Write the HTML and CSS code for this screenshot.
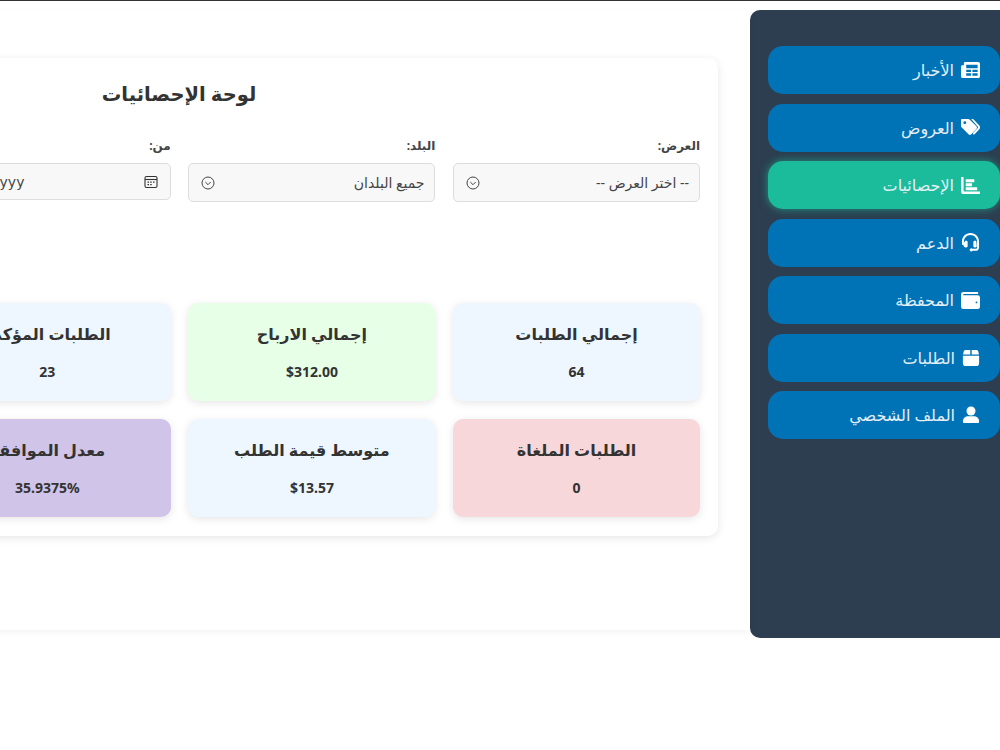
FILE: index.html
```html
<!DOCTYPE html>
<html lang="ar" dir="rtl">
<head>
<meta charset="utf-8">
<title>لوحة الإحصائيات</title>
<link rel="stylesheet" href="styles.css">
</head>
<body>
<div class="layout">
  <aside class="sidebar">
    <nav class="nav">
      <a class="nav-item"><svg class="nav-icon" viewBox="0 0 20 20"><path fill-rule="evenodd" d="M3 2.500A1.500 1.500 0 0 1 4.500 1H18a2 2 0 0 1 2 2v13a2 2 0 0 1-2 2H2a2 2 0 0 1-2-2V6a1.500 1.500 0 0 1 1.500-1.500H3zM5.500 4v3.500h12V4zM5.500 9.200v2.300h5V9.200zm6.500 0v2.300h5.500V9.200zM5.500 13v2.500h5V13zm6.500 0v2.500h5.500V13z"/></svg><span>الأخبار</span></a>
      <a class="nav-item"><svg class="nav-icon" viewBox="0 0 20 20"><path fill-rule="evenodd" d="M0 2.200C0 1.500.6 1 1.300 1h6.200c.6 0 1.100.2 1.500.6l7.200 7.200c.8.800.8 2.100 0 2.900l-5.400 5.500c-.8.800-2.100.8-2.900 0L.6 9.800C.2 9.400 0 8.900 0 8.300zM4 3.400a1.500 1.500 0 1 0 0 3 1.500 1.500 0 0 0 0-3z"/><path d="M10.700 1h1.400c.5 0 .9.200 1.200.5l6 6.300c1 1.100 1 2.900 0 4l-5 5.200c-.4.400-1.100.4-1.500 0-.4-.4-.4-1 0-1.400l4.900-5.100c.4-.4.400-1 0-1.400z"/></svg><span>العروض</span></a>
      <a class="nav-item active"><svg class="nav-icon" viewBox="0 0 20 20"><path d="M2.700 1v14.300c0 .6.500 1 1 1H20V19H3a3 3 0 0 1-3-3V1z"/><path d="M5 3.500h9v3H5zM5 7.700h6.500v3H5zM5 11.900h12v3H5z"/></svg><span>الإحصائيات</span></a>
      <a class="nav-item"><svg class="nav-icon" viewBox="0 0 20 20"><path d="M10 0C4.800 0 1 4 1 9v2.500c0 .6.500 1.100 1.100 1.100s1-.5 1-1.100V9c0-3.800 3.100-6.900 6.900-6.900s6.900 3.100 6.900 6.900v6.200c0 .8-.6 1.500-1.400 1.500h-3.300a1.700 1.700 0 1 0 0 2.100h3.300c2 0 3.500-1.600 3.500-3.600V9c0-5-3.800-9-9-9z"/><path d="M3.800 9.300c0-.6.500-1.100 1.100-1.100h.7c.8 0 1.400.6 1.400 1.400v4.200c0 .8-.6 1.400-1.400 1.400h-.4c-1.500 0-2.700-1.300-2.700-2.900 0-1.100.3-2 .8-2.100zM16.200 9.300c0-.6-.5-1.100-1.100-1.100h-.7c-.8 0-1.400.6-1.400 1.400v4.200c0 .8.600 1.400 1.400 1.400h.4c.8 0 1.400-.3 1.800-.8z"/></svg><span>الدعم</span></a>
      <a class="nav-item"><svg class="nav-icon" viewBox="0 0 20 20"><path fill-rule="evenodd" d="M2.500 1H17c.8 0 1.200.5 1.200 1.100 0 .6-.4 1.100-1.200 1.100H3c-.4 0-.7.300-.7.700s.3.700.7.700h14.500A2.500 2.500 0 0 1 20 7v9.500a2.500 2.500 0 0 1-2.500 2.500h-15A2.500 2.500 0 0 1 0 16.500v-13A2.500 2.500 0 0 1 2.500 1zM16.300 11a1 1 0 1 0 0 2 1 1 0 0 0 0-2z"/></svg><span>المحفظة</span></a>
      <a class="nav-item"><svg class="nav-icon narrow" viewBox="0 0 20 20"><path d="M3.800 1h5.400v5H1.200l.7-3.200C2.100 1.800 2.900 1 3.800 1zM10.800 1h5.400c.9 0 1.700.8 1.900 1.800l.7 3.200h-8zM1 7.500h18v8.500c0 1.700-1.300 3-3 3H4c-1.700 0-3-1.300-3-3z"/></svg><span>الطلبات</span></a>
      <a class="nav-item"><svg class="nav-icon narrow" viewBox="0 0 20 20"><circle cx="10" cy="5.500" r="5"/><path d="M6.500 11.500h7c3 0 5.500 2.500 5.500 5.500v.5c0 .8-.7 1.500-1.500 1.500h-15C1.700 19 1 18.300 1 17.500V17c0-3 2.500-5.500 5.500-5.500z"/></svg><span>الملف الشخصي</span></a>
    </nav>
  </aside>
  <main class="main">
    <section class="panel">
      <h1 class="title">لوحة الإحصائيات</h1>
      <div class="filters">
        <div class="field">
          <label class="label">العرض:</label>
          <div class="select"><span>-- اختر العرض --</span><svg class="chev" viewBox="0 0 14 14"><circle cx="7" cy="7" r="6"/><path d="M4.300 6l2.700 2.700L9.700 6"/></svg></div>
        </div>
        <div class="field">
          <label class="label">البلد:</label>
          <div class="select"><span>جميع البلدان</span><svg class="chev" viewBox="0 0 14 14"><circle cx="7" cy="7" r="6"/><path d="M4.300 6l2.700 2.700L9.700 6"/></svg></div>
        </div>
        <div class="field">
          <label class="label">من:</label>
          <div class="date"><svg class="cal" viewBox="0 0 14 14"><rect x="1" y="1.500" width="12" height="11" rx="1.500"/><path d="M1 4.500h12"/><path class="dots" d="M3.500 6.500h1.500v1.300H3.500zM6.200 6.500h1.500v1.300H6.200zM9 6.500h1.500v1.300H9zM3.500 9h1.500v1.300H3.500zM6.200 9h1.500v1.300H6.200z"/></svg><span>mm/dd/yyyy</span></div>
        </div>
        <div class="field">
          <label class="label">إلى:</label>
          <div class="date"><svg class="cal" viewBox="0 0 14 14"><rect x="1" y="1.500" width="12" height="11" rx="1.500"/><path d="M1 4.500h12"/><path class="dots" d="M3.500 6.500h1.500v1.300H3.500zM6.200 6.500h1.500v1.300H6.200zM9 6.500h1.500v1.300H9zM3.500 9h1.500v1.300H3.500zM6.200 9h1.500v1.300H6.200z"/></svg><span>mm/dd/yyyy</span></div>
        </div>
      </div>
      <div class="stats">
        <div class="stat blue"><h3>إجمالي الطلبات</h3><p>64</p></div>
        <div class="stat green"><h3>إجمالي الارباح</h3><p>$312.00</p></div>
        <div class="stat blue"><h3>الطلبات المؤكدة</h3><p>23</p></div>
        <div class="stat blue"><h3>الطلبات المعلقة</h3><p>41</p></div>
        <div class="stat red"><h3>الطلبات الملغاة</h3><p>0</p></div>
        <div class="stat blue"><h3>متوسط قيمة الطلب</h3><p>$13.57</p></div>
        <div class="stat purple"><h3>معدل الموافقة</h3><p>35.9375%</p></div>
        <div class="stat blue"><h3>معدل الإلغاء</h3><p>0%</p></div>
      </div>
    </section>
  </main>
</div>
</body>
</html>
```
FILE: styles.css
```css
* { box-sizing: border-box; }
html, body { margin: 0; height: 100%; }
body {
  overflow: hidden;
  background: #fff;
  border-top: 1px solid #333;
  font-family: "Noto Sans", "DejaVu Sans", sans-serif;
  color: #333;
}
.layout { display: flex; align-items: flex-start; width: 1000px; padding-top: 9px; }
.sidebar {
  flex: 0 0 250px;
  height: 628px;
  background: #2c3e50;
  border-radius: 10px 0 0 10px;
  padding: 36px 0 0 18px;
}
.nav { display: flex; flex-direction: column; gap: 9.5px; }
.nav-item {
  display: flex;
  align-items: center;
  gap: 7px;
  height: 48px;
  padding: 0 20px;
  background: #0073b7;
  border-radius: 15px;
  color: #e4eef5;
  font-size: 16px;
}
.nav-item.active { background: #1abc9c; box-shadow: 0 0 8px rgba(26,188,156,.7); }
.nav-icon { width: 19px; height: 19px; flex: none; fill: #fff; }
.nav-icon.narrow { width: 18px; height: 18px; }
.main {
  flex: 0 0 auto;
  height: 620px;
  padding: 48px 32px 0;
  box-shadow: 0 2px 6px rgba(0,0,0,.05);
}
.panel {
  width: 1078px;
  height: 478px;
  padding: 18px;
  background: #fff;
  border-radius: 10px;
  box-shadow: 0 2px 8px rgba(0,0,0,.1);
}
.title { margin: 0; text-align: center; font-size: 19.500px; line-height: 36px; color: #333; font-weight: 700; }
.filters { display: grid; grid-template-columns: repeat(4, 247px); gap: 17.6px; margin-top: 25px; }
.field { display: flex; flex-direction: column; height: 166px; }
.label { font-size: 12px; font-weight: 700; line-height: 18px; margin-bottom: 8px; color: #444; }
.select, .date {
  display: flex;
  align-items: center;
  justify-content: space-between;
  background: #f8f8f8;
  border: 1px solid #ddd;
  border-radius: 5px;
  font-size: 14px;
  color: #444;
}
.select { height: 39px; padding: 0 10px 0 12px; }
.date { height: 37px; padding: 0 12px 0 12px; }
.date span { direction: ltr; font-family: "DejaVu Sans", sans-serif; font-size: 14px; }
.chev { width: 14px; height: 14px; fill: none; stroke: #444; stroke-width: 1; }
.cal { width: 14px; height: 14px; fill: none; stroke: #333; stroke-width: 1.100; }
.cal .dots { fill: #333; stroke: none; }
.stats { display: grid; grid-template-columns: repeat(4, 247px); grid-auto-rows: 98px; column-gap: 17.6px; row-gap: 18px; }
.stat {
  display: flex;
  flex-direction: column;
  align-items: center;
  border-radius: 10px;
  box-shadow: 0 2px 8px rgba(0,0,0,.1);
  padding-top: 18px;
}
.stat h3 { margin: 0; font-size: 16px; line-height: 26px; font-weight: 700; color: #333; white-space: nowrap; }
.stat p { margin: 13px 0 0; font-size: 14px; line-height: 24px; font-weight: 700; color: #333; }
.blue { background: #eef7ff; }
.green { background: #e6ffe6; }
.red { background: #f8d7da; }
.purple { background: #d1c4e9; }
```
